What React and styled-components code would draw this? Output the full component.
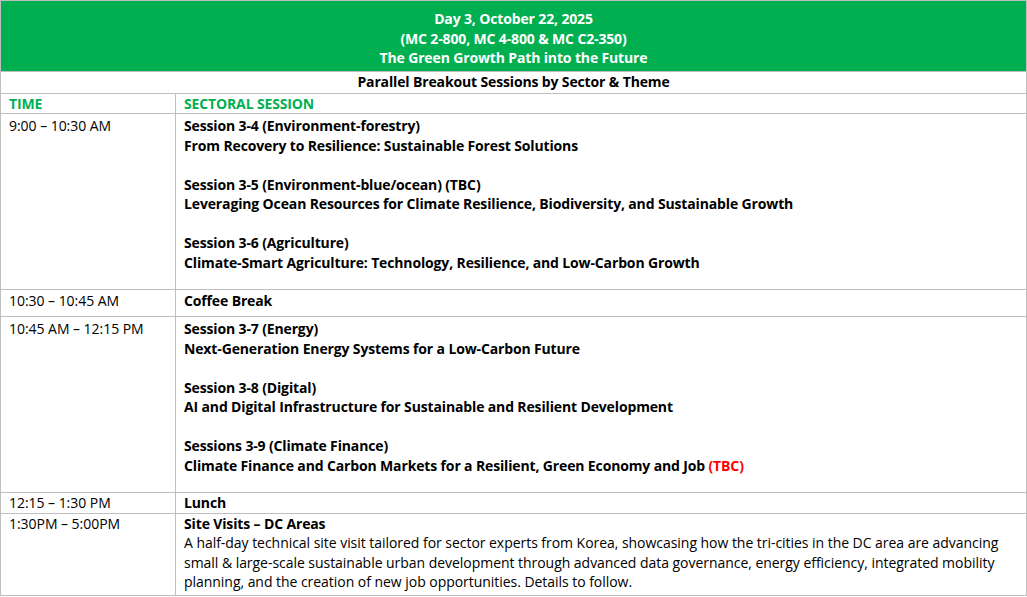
import React from 'react';
import styled, { createGlobalStyle } from 'styled-components';

const GlobalStyle = createGlobalStyle`
  html, body {
    margin: 0;
    padding: 0;
    background: #ffffff;
  }
  body {
    font-family: "Open Sans", "Noto Sans", sans-serif;
    color: #000000;
  }
`;

const StTable = styled.table`
  width: 1027px;
  border-collapse: collapse;
  table-layout: fixed;
  font-size: 14px;
  line-height: 19.5px;
`;

const StCell = styled.td`
  border: 1px solid #bfbfbf;
  padding: ${(props) => props.$pt || 0}px 8px ${(props) => props.$pb || 0}px;
  vertical-align: top;
  text-align: ${(props) => (props.$center ? 'center' : 'left')};
  font-weight: ${(props) => (props.$bold ? 700 : 400)};
  letter-spacing: ${(props) => (props.$bold ? '-0.14px' : '-0.04px')};
  color: ${(props) => (props.$green ? '#00b050' : '#000000')};
  height: ${(props) => (props.$h ? props.$h + 'px' : 'auto')};
`;

const StBanner = styled.td`
  background-color: #00b050;
  color: #ffffff;
  border: 1px solid #bfbfbf;
  text-align: center;
  font-weight: 700;
  letter-spacing: -0.14px;
  padding: 8px 8px 3px;
`;

const StBlock = styled.div`
  font-weight: 700;
  letter-spacing: -0.14px;
  margin-bottom: 19.5px;
  &:last-child {
    margin-bottom: 17px;
  }
`;

const StTitle = styled.div`
  font-weight: 700;
  letter-spacing: -0.14px;
`;

const StPlain = styled.div`
  font-weight: 400;
`;

const StRed = styled.span`
  color: #ff0000;
`;

const morning = [
  ['Session 3-4 (Environment-forestry)', 'From Recovery to Resilience: Sustainable Forest Solutions'],
  [
    'Session 3-5 (Environment-blue/ocean) (TBC)',
    'Leveraging Ocean Resources for Climate Resilience, Biodiversity, and Sustainable Growth',
  ],
  ['Session 3-6 (Agriculture)', 'Climate-Smart Agriculture: Technology, Resilience, and Low-Carbon Growth'],
];

const midday = [
  ['Session 3-7 (Energy)', 'Next-Generation Energy Systems for a Low-Carbon Future'],
  ['Session 3-8 (Digital)', 'AI and Digital Infrastructure for Sustainable and Resilient Development'],
  [
    'Sessions 3-9 (Climate Finance)',
    <>
      Climate Finance and Carbon Markets for a Resilient, Green Economy and Job <StRed>(TBC)</StRed>
    </>,
  ],
];

function Sessions({ list }) {
  return list.map(([title, sub], i) => (
    <StBlock key={i}>
      <div>{title}</div>
      <div>{sub}</div>
    </StBlock>
  ));
}

function App() {
  return (
    <>
      <GlobalStyle />
      <StTable>
        <colgroup>
          <col style={{ width: '175px' }} />
          <col />
        </colgroup>
        <tbody>
          <tr>
            <StBanner colSpan={2}>
              <div>Day 3, October 22, 2025</div>
              <div>(MC 2-800, MC 4-800 &amp; MC C2-350)</div>
              <div>The Green Growth Path into the Future</div>
            </StBanner>
          </tr>
          <tr>
            <StCell colSpan={2} $center $bold $h={21}>
              Parallel Breakout Sessions by Sector &amp; Theme
            </StCell>
          </tr>
          <tr>
            <StCell $bold $green>TIME</StCell>
            <StCell $bold $green>SECTORAL SESSION</StCell>
          </tr>
          <tr>
            <StCell $pt={2}>9:00 – 10:30 AM</StCell>
            <StCell $pt={2}>
              <Sessions list={morning} />
            </StCell>
          </tr>
          <tr>
            <StCell $pt={1} $h={25}>10:30 – 10:45 AM</StCell>
            <StCell $pt={1} $bold>Coffee Break</StCell>
          </tr>
          <tr>
            <StCell $pt={2}>10:45 AM – 12:15 PM</StCell>
            <StCell $pt={2}>
              <Sessions list={midday} />
            </StCell>
          </tr>
          <tr>
            <StCell>12:15 – 1:30 PM</StCell>
            <StCell $bold>Lunch</StCell>
          </tr>
          <tr>
            <StCell $pb={3}>1:30PM – 5:00PM</StCell>
            <StCell $pb={3}>
              <StTitle>Site Visits – DC Areas</StTitle>
              <StPlain>
                A half-day technical site visit tailored for sector experts from Korea, showcasing how the
                tri-cities in the DC area are advancing small &amp; large-scale sustainable urban development
                through advanced data governance, energy efficiency, integrated mobility planning, and the
                creation of new job opportunities. Details to follow.
              </StPlain>
            </StCell>
          </tr>
        </tbody>
      </StTable>
    </>
  );
}

export default App;
